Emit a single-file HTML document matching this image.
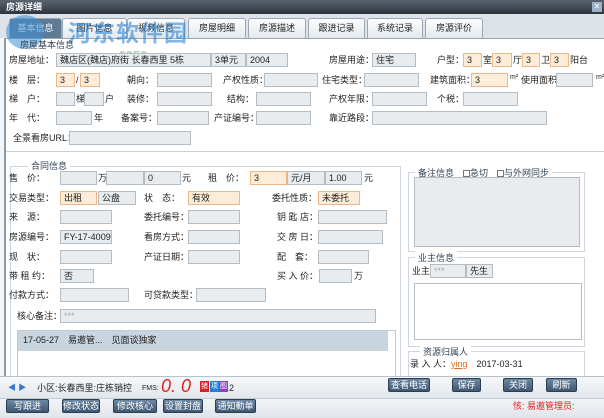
<!DOCTYPE html><html><head><meta charset="utf-8"><style>
*{margin:0;padding:0;box-sizing:border-box}
body{width:604px;height:418px;overflow:hidden;background:#f4f6f8;font:9px "Liberation Sans","Noto Sans CJK SC",sans-serif;color:#222;position:relative}
.a{position:absolute;white-space:nowrap}
.f,.o{position:absolute;background:#e9ecef;border:1px solid #b4bcc4;height:14px;font-size:9px;line-height:12px;padding-left:3px;white-space:nowrap;overflow:hidden}
.o{background:#fdecd8;border-color:#f0b888}
.l{position:absolute;white-space:nowrap;font-size:9px;line-height:14px}
.b{position:absolute;background:linear-gradient(#6d88a3,#3e5874);border:1px solid #2c3e52;border-radius:2px;color:#fff;font-size:9px;text-align:center;line-height:12px;height:14px;white-space:nowrap;overflow:hidden}
.g{position:absolute;border:1px solid #d0d6dc}
.gt{position:absolute;background:#fff;padding:0 3px;font-size:9px;color:#345;white-space:nowrap}
.tab{position:absolute;top:18px;height:20px;border:1px solid #9aa8b6;border-bottom:none;background:linear-gradient(#fdfdfd,#e4e9ee);border-radius:3px 3px 0 0;text-align:center;line-height:19px;font-size:9px;white-space:nowrap}
</style></head><body>
<div class="a" style="left:0;top:0;width:604px;height:14px;background:linear-gradient(#5a6470,#2c343e);color:#fff;font-weight:bold;font-size:9px;line-height:14px;padding-left:6px">房源详细</div>
<div class="a" style="left:592px;top:2px;width:10px;height:10px;background:#9fb3c8;color:#fff;font-size:8px;line-height:10px;text-align:center">✕</div>
<div class="a" style="left:0;top:14px;width:604px;height:24px;background:#dde3e9"></div>
<div class="tab" style="left:9px;width:53px;background:#5f7a95;color:#fff">基本信息</div>
<div class="tab" style="left:62px;width:65px">图片信息</div>
<div class="tab" style="left:127px;width:58px">视频信息</div>
<div class="tab" style="left:188px;width:58px">房屋明细</div>
<div class="tab" style="left:248px;width:58px">房源描述</div>
<div class="tab" style="left:308px;width:57px">跟进记录</div>
<div class="tab" style="left:367px;width:56px">系统记录</div>
<div class="tab" style="left:425px;width:58px">房源评价</div>
<div class="a" style="left:4px;top:38px;width:600px;height:338px;background:#fff;border-left:2px solid #8c9aa8;border-top:1px solid #9aa8b6"></div>
<!-- watermark -->
<div class="a" style="left:6px;top:15px;width:38px;height:34px;border-radius:50%;background:#3d8fd6;opacity:.55"></div>
<div class="a" style="left:68px;top:14px;color:#2f86d4;font-size:23px;font-weight:bold;opacity:.6;letter-spacing:1px">河东软件园</div>
<div class="a" style="left:70px;top:48px;color:#4aa060;font-size:13px;font-weight:bold;opacity:.45">www.pc0359.cn</div>
<div class="l" style="left:20px;top:38px;color:#345">房屋基本信息</div>
<!-- row1 -->
<div class="l" style="left:9px;top:53px">房屋地址：</div>
<div class="f" style="left:56px;top:53px;width:155px">魏店区(魏店)府街 长春西里 5栋</div>
<div class="f" style="left:211px;top:53px;width:35px">3单元</div>
<div class="f" style="left:246px;top:53px;width:42px">2004</div>
<div class="l" style="left:329px;top:53px">房屋用途：</div>
<div class="f" style="left:372px;top:53px;width:44px">住宅</div>
<div class="l" style="left:437px;top:53px">户型：</div>
<div class="o" style="left:463px;top:53px;width:19px">3</div><div class="l" style="left:483px;top:53px">室</div>
<div class="o" style="left:492px;top:53px;width:20px">3</div><div class="l" style="left:513px;top:53px">厅</div>
<div class="o" style="left:522px;top:53px;width:18px">3</div><div class="l" style="left:541px;top:53px">卫</div>
<div class="o" style="left:550px;top:53px;width:19px">3</div><div class="l" style="left:570px;top:53px">阳台</div>
<!-- row2 -->
<div class="l" style="left:9px;top:73px">楼　层：</div>
<div class="o" style="left:56px;top:73px;width:19px">3</div><div class="l" style="left:76px;top:73px">/</div>
<div class="o" style="left:80px;top:73px;width:20px">3</div>
<div class="l" style="left:127px;top:73px">朝向：</div><div class="f" style="left:157px;top:73px;width:55px"></div>
<div class="l" style="left:223px;top:73px">产权性质：</div><div class="f" style="left:264px;top:73px;width:54px"></div>
<div class="l" style="left:322px;top:73px">住宅类型：</div><div class="f" style="left:364px;top:73px;width:55px"></div>
<div class="l" style="left:430px;top:73px">建筑面积：</div><div class="o" style="left:471px;top:73px;width:37px">3</div>
<div class="l" style="left:510px;top:71px;font-size:7px">m²</div>
<div class="l" style="left:521px;top:73px">使用面积</div><div class="f" style="left:556px;top:73px;width:37px"></div>
<div class="l" style="left:596px;top:71px;font-size:7px">m²</div>
<!-- row3 -->
<div class="l" style="left:9px;top:92px">梯　户：</div>
<div class="f" style="left:56px;top:92px;width:19px"></div><div class="l" style="left:76px;top:92px">梯</div>
<div class="f" style="left:84px;top:92px;width:20px"></div><div class="l" style="left:105px;top:92px">户</div>
<div class="l" style="left:127px;top:92px">装修：</div><div class="f" style="left:157px;top:92px;width:55px"></div>
<div class="l" style="left:227px;top:92px">结构：</div><div class="f" style="left:256px;top:92px;width:55px"></div>
<div class="l" style="left:329px;top:92px">产权年限：</div><div class="f" style="left:372px;top:92px;width:55px"></div>
<div class="l" style="left:437px;top:92px">个税：</div><div class="f" style="left:463px;top:92px;width:55px"></div>
<!-- row4 -->
<div class="l" style="left:9px;top:111px">年　代：</div>
<div class="f" style="left:56px;top:111px;width:36px"></div><div class="l" style="left:94px;top:111px">年</div>
<div class="l" style="left:121px;top:111px">备案号：</div><div class="f" style="left:157px;top:111px;width:52px"></div>
<div class="l" style="left:214px;top:111px">产证编号：</div><div class="f" style="left:256px;top:111px;width:55px"></div>
<div class="l" style="left:329px;top:111px">靠近路段：</div><div class="f" style="left:372px;top:111px;width:175px"></div>
<!-- row5 -->
<div class="l" style="left:13px;top:131px">全景看房URL：</div><div class="f" style="left:69px;top:131px;width:122px"></div>
<div class="a" style="left:6px;top:151px;width:598px;border-top:1px solid #c8d0d8"></div>
<!-- contract -->
<div class="g" style="left:10px;top:166px;width:391px;height:212px"></div>
<div class="gt" style="left:28px;top:159px">合同信息</div>
<div class="l" style="left:9px;top:171px">售　价：</div>
<div class="f" style="left:60px;top:171px;width:37px"></div><div class="l" style="left:98px;top:171px">万</div>
<div class="f" style="left:106px;top:171px;width:38px"></div><div class="f" style="left:144px;top:171px;width:37px">0</div><div class="l" style="left:182px;top:171px">元</div>
<div class="l" style="left:208px;top:171px">租　价：</div>
<div class="o" style="left:250px;top:171px;width:37px">3</div><div class="f" style="left:287px;top:171px;width:38px">元/月</div><div class="f" style="left:325px;top:171px;width:37px">1.00</div><div class="l" style="left:364px;top:171px">元</div>
<div class="l" style="left:9px;top:191px">交易类型：</div>
<div class="o" style="left:60px;top:191px;width:37px">出租</div><div class="f" style="left:98px;top:191px;width:38px">公盘</div>
<div class="l" style="left:144px;top:191px">状　态：</div><div class="o" style="left:188px;top:191px;width:52px">有效</div>
<div class="l" style="left:272px;top:191px">委托性质：</div><div class="o" style="left:318px;top:191px;width:42px">未委托</div>
<div class="l" style="left:9px;top:210px">来　源：</div><div class="f" style="left:60px;top:210px;width:52px"></div>
<div class="l" style="left:144px;top:210px">委托编号：</div><div class="f" style="left:188px;top:210px;width:52px"></div>
<div class="l" style="left:277px;top:210px">钥 匙 店：</div><div class="f" style="left:318px;top:210px;width:69px"></div>
<div class="l" style="left:9px;top:230px">房源编号：</div><div class="f" style="left:60px;top:230px;width:52px">FY-17-4009</div>
<div class="l" style="left:144px;top:230px">看房方式：</div><div class="f" style="left:188px;top:230px;width:52px"></div>
<div class="l" style="left:277px;top:230px">交 房 日：</div><div class="f" style="left:318px;top:230px;width:65px"></div>
<div class="l" style="left:9px;top:250px">现　状：</div><div class="f" style="left:60px;top:250px;width:52px"></div>
<div class="l" style="left:144px;top:250px">产证日期：</div><div class="f" style="left:188px;top:250px;width:52px"></div>
<div class="l" style="left:277px;top:250px">配　套：</div><div class="f" style="left:318px;top:250px;width:51px"></div>
<div class="l" style="left:9px;top:269px">带 租 约：</div><div class="f" style="left:60px;top:269px;width:34px">否</div>
<div class="l" style="left:277px;top:269px">买 入 价：</div><div class="f" style="left:319px;top:269px;width:33px"></div><div class="l" style="left:354px;top:269px">万</div>
<div class="l" style="left:9px;top:288px">付款方式：</div><div class="f" style="left:60px;top:288px;width:69px"></div>
<div class="l" style="left:144px;top:288px">可贷款类型：</div><div class="f" style="left:196px;top:288px;width:70px"></div>
<div class="l" style="left:17px;top:309px">核心备注：</div><div class="f" style="left:60px;top:309px;width:316px;color:#aaa">***</div>
<div class="a" style="left:17px;top:330px;width:379px;height:48px;border:1px solid #c0c8d0;background:#fff"></div>
<div class="a" style="left:18px;top:331px;width:370px;height:20px;background:#c8d4de;font-size:9px;line-height:18px;padding-left:5px">17-05-27　易邀管...　见面谈独家</div>
<!-- right -->
<div class="g" style="left:408px;top:172px;width:177px;height:80px"></div>
<div class="gt" style="left:415px;top:166px">备注信息　<span style="display:inline-block;width:7px;height:7px;border:1px solid #777;vertical-align:-1px"></span>急切　<span style="display:inline-block;width:7px;height:7px;border:1px solid #777;vertical-align:-1px"></span>与外网同步</div>
<div class="a" style="left:414px;top:177px;width:166px;height:70px;background:#e9ecef;border:1px solid #b4bcc4"></div>
<div class="g" style="left:408px;top:257px;width:177px;height:90px"></div>
<div class="gt" style="left:415px;top:251px">业主信息</div>
<div class="l" style="left:412px;top:264px">业主:</div>
<div class="f" style="left:430px;top:264px;width:36px;color:#aaa">***</div><div class="f" style="left:466px;top:264px;width:27px">先生</div>
<div class="a" style="left:414px;top:283px;width:168px;height:57px;background:#fff;border:1px solid #b4bcc4"></div>
<div class="g" style="left:408px;top:351px;width:177px;height:30px"></div>
<div class="gt" style="left:420px;top:345px">资源归属人</div>
<div class="l" style="left:410px;top:357px">录 入 人：<span style="color:#e07020;text-decoration:underline">ying</span>　2017-03-31</div>
<!-- bottom bar -->
<div class="a" style="left:0;top:376px;width:604px;height:22px;background:linear-gradient(#f6f8fa,#e2e7ec);border-top:1px solid #b8c2cc"></div>
<div class="l" style="left:8px;top:381px;color:#3a78c8;font-size:8px">◀ ▶</div>
<div class="l" style="left:37px;top:381px">小区:长春西里:庄栋销控</div>
<div class="l" style="left:142px;top:382px;font-size:7px">FMS:</div>
<div class="l" style="left:161px;top:376px;color:#e02020;font-size:18px;font-style:italic;line-height:20px">0. 0</div>
<div class="a" style="left:200px;top:381px;width:9px;height:11px;background:#d82020;color:#fff;font-size:7px;line-height:11px;text-align:center">猪</div>
<div class="a" style="left:210px;top:381px;width:9px;height:11px;background:#2080d0;color:#fff;font-size:7px;line-height:11px;text-align:center">项</div>
<div class="a" style="left:219px;top:381px;width:9px;height:11px;background:#9040c0;color:#fff;font-size:7px;line-height:11px;text-align:center">图</div>
<div class="l" style="left:229px;top:381px">2</div>
<div class="b" style="left:388px;top:378px;width:42px">查看电话</div>
<div class="b" style="left:452px;top:378px;width:29px">保存</div>
<div class="b" style="left:503px;top:378px;width:30px">关闭</div>
<div class="b" style="left:546px;top:378px;width:31px">刷新</div>
<div class="a" style="left:0;top:398px;width:604px;height:20px;background:linear-gradient(#f2f4f6,#e0e5ea);border-top:1px solid #c4ccd4"></div>
<div class="b" style="left:6px;top:399px;width:43px">写跟进</div>
<div class="b" style="left:62px;top:399px;width:38px">修改状态</div>
<div class="b" style="left:113px;top:399px;width:44px">修改核心</div>
<div class="b" style="left:163px;top:399px;width:40px">设置封盘</div>
<div class="b" style="left:215px;top:399px;width:41px">通知勤单</div>
<div class="l" style="left:513px;top:399px;color:#e02020">㤥: 易邀管理员:</div>
</body></html>
